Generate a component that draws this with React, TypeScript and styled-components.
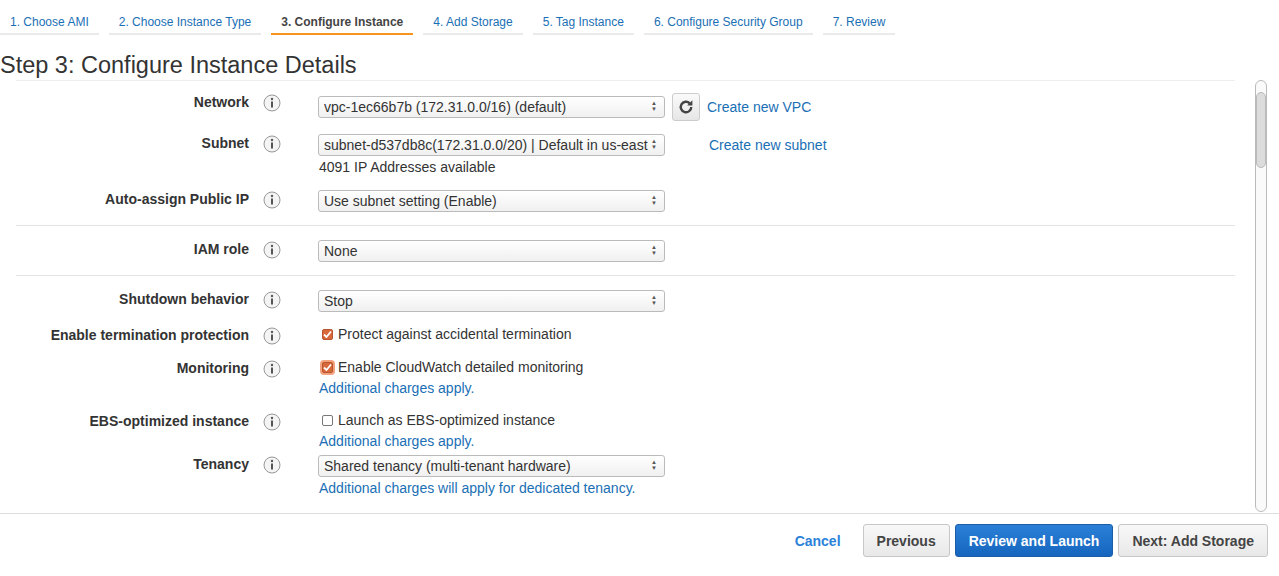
import React from "react";
import styled, { createGlobalStyle } from "styled-components";

const Global = createGlobalStyle`
  body { margin: 0; font-family: "Liberation Sans", Arial, sans-serif; color: #333; background: #fff; }
`;

const Page = styled.div`
  width: 1279px; height: 576px; display: flex; flex-direction: column; overflow: hidden;
`;
const Tabs = styled.div`
  display: flex; gap: 10px; padding-top: 12px; height: 24px;
`;
const Tab = styled.div<{ $active?: boolean }>`
  font-size: 12px; padding: 3px 10px 0 10px; height: 23px; box-sizing: border-box;
  color: ${p => (p.$active ? "#444" : "#1a6fb5")};
  font-weight: ${p => (p.$active ? "bold" : "normal")};
  border-bottom: 2px solid ${p => (p.$active ? "#f7941d" : "#eaeaea")};
  white-space: nowrap;
`;
const Heading = styled.h1`
  margin: 0; font-size: 23.5px; font-weight: normal; color: #333; height: 44px; line-height: 58px;
`;
const Body = styled.div`
  display: flex; height: 433px; border-bottom: 1px solid #ddd;
`;
const Content = styled.div`
  width: 1219px; margin-left: 16px; border-top: 1px solid #eee; padding-top: 12px; box-sizing: border-box;
`;
const Row = styled.div<{ $mt?: number }>`
  display: grid; grid-template-columns: 233px 69px 560px; align-items: start;
  margin-top: ${p => p.$mt ?? 0}px;
`;
const Label = styled.div`
  text-align: right; font-size: 14px; font-weight: bold; line-height: 16px; padding-top: 1px;
`;
const InfoWrap = styled.div`
  display: flex; padding-left: 14px; padding-top: 1px;
`;
const Control = styled.div`
  display: flex; flex-direction: column; font-size: 14px;
`;
const Line = styled.div`
  display: flex; align-items: center; gap: 7px;
`;
const Select = styled.div`
  width: 347px; height: 22px; box-sizing: border-box; border: 1px solid #bbb; border-radius: 3px;
  background: linear-gradient(#fff, #f0f0f0); font-size: 14px; padding: 0 4px 0 5px; line-height: 20px;
  display: flex; color: #333;
`;
const SelText = styled.span`
  flex: 1; white-space: nowrap; overflow: hidden;
`;
const Arrows = styled.span`
  width: 12px; font-size: 6px; line-height: 6px; color: #555; padding-top: 3px;
  display: flex; flex-direction: column; align-items: center;
`;
const IconBtn = styled.div`
  width: 28px; height: 28px; box-sizing: border-box; border: 1px solid #ccc; border-radius: 3px;
  background: linear-gradient(#fafafa, #e6e6e6); display: flex; align-items: center; justify-content: center;
`;
const Link = styled.a`
  color: #1a6fb5; font-size: 14px; text-decoration: none; white-space: nowrap;
`;
const Spacer = styled.span`
  width: 30px;
`;
const Note = styled.div<{ $link?: boolean; $mt?: number }>`
  color: ${p => (p.$link ? "#1a6fb5" : "#333")}; margin-top: ${p => p.$mt ?? 3}px; line-height: 16px; padding-left: 1px;
`;
const Sep = styled.div<{ $mt: number }>`
  border-top: 1px solid #e4e4e4; margin-top: ${p => p.$mt}px;
`;
const Check = styled.span<{ $on?: boolean; $glow?: boolean }>`
  width: 11px; height: 11px; box-sizing: border-box; display: inline-flex; align-items: center; justify-content: center;
  border: 1px solid ${p => (p.$on ? "#b9552b" : "#777")}; border-radius: 2px;
  background: ${p => (p.$on ? "#d8693c" : "#fff")};
  box-shadow: ${p => (p.$glow ? "0 0 0 2px #f2a27e" : "none")};
  margin: 0 5px 0 4px;
`;
const CheckLine = styled.div`
  display: flex; align-items: center; font-size: 14px; line-height: 16px;
`;
const ScrollBar = styled.div`
  width: 12px; margin-left: 20px; height: 432px; border: 1px solid #bbb; border-radius: 6px; box-sizing: border-box;
  background: #fafafa; display: flex; flex-direction: column; align-items: center;
`;
const Thumb = styled.div`
  width: 10px; height: 76px; margin-top: 11px; background: #dcdcdc; border: 1px solid #bbb; border-radius: 5px; box-sizing: border-box;
`;
const Footer = styled.div`
  display: flex; justify-content: flex-end; align-items: center; gap: 5px; padding: 10px 11px 0 0;
`;
const Btn = styled.button<{ $primary?: boolean }>`
  height: 33px; font: bold 14px "Liberation Sans", Arial, sans-serif; padding: 0 13px; border-radius: 3px;
  border: 1px solid ${p => (p.$primary ? "#1a5ea8" : "#c7c7c7")};
  color: ${p => (p.$primary ? "#fff" : "#444")};
  background: ${p => (p.$primary ? "linear-gradient(#2b80d6,#1565bf)" : "linear-gradient(#f8f8f8,#e8e8e8)")};
`;
const Cancel = styled.a`
  color: #2b82d9; font-weight: bold; font-size: 14px; margin-right: 17px;
`;

const Info = () => (
  <svg width="18" height="18" viewBox="0 0 18 18">
    <circle cx="9" cy="9" r="8" fill="#f4f4f4" stroke="#999" />
    <circle cx="9" cy="5" r="1.2" fill="#555" />
    <rect x="8" y="7.5" width="2" height="6" fill="#555" />
  </svg>
);
const Sel = ({ children }: { children: React.ReactNode }) => (
  <Select><SelText>{children}</SelText><Arrows><span>▲</span><span>▼</span></Arrows></Select>
);
const Tick = () => (
  <svg width="9" height="9" viewBox="0 0 9 9"><path d="M1 4.5 L3.5 7 L8 1.5" stroke="#fff" strokeWidth="1.8" fill="none" /></svg>
);

export default function App() {
  const tabs = ["1. Choose AMI", "2. Choose Instance Type", "3. Configure Instance", "4. Add Storage", "5. Tag Instance", "6. Configure Security Group", "7. Review"];
  return (
    <Page>
      <Global />
      <Tabs>{tabs.map((t, i) => <Tab key={t} $active={i === 2}>{t}</Tab>)}</Tabs>
      <Heading>Step 3: Configure Instance Details</Heading>
      <Body>
        <Content>
          <Row>
            <Label>Network</Label><InfoWrap><Info /></InfoWrap>
            <Control><Line><Sel>vpc-1ec66b7b (172.31.0.0/16) (default)</Sel>
              <IconBtn><svg width="18" height="18" viewBox="0 0 24 24"><path d="M19 12a7 7 0 1 1-2.05-4.95" stroke="#444" strokeWidth="3.2" fill="none" /><path d="M20.5 3v7h-7z" fill="#444" /></svg></IconBtn>
              <Link>Create new VPC</Link></Line></Control>
          </Row>
          <Row $mt={13}>
            <Label>Subnet</Label><InfoWrap><Info /></InfoWrap>
            <Control><Line><Sel>subnet-d537db8c(172.31.0.0/20) | Default in us-east-1a</Sel><Spacer /><Link>Create new subnet</Link></Line>
              <Note>4091 IP Addresses available</Note></Control>
          </Row>
          <Row $mt={15}>
            <Label>Auto-assign Public IP</Label><InfoWrap><Info /></InfoWrap>
            <Control><Sel>Use subnet setting (Enable)</Sel></Control>
          </Row>
          <Sep $mt={13} />
          <Row $mt={14}>
            <Label>IAM role</Label><InfoWrap><Info /></InfoWrap>
            <Control><Sel>None</Sel></Control>
          </Row>
          <Sep $mt={13} />
          <Row $mt={14}>
            <Label>Shutdown behavior</Label><InfoWrap><Info /></InfoWrap>
            <Control><Sel>Stop</Sel></Control>
          </Row>
          <Row $mt={14}>
            <Label>Enable termination protection</Label><InfoWrap><Info /></InfoWrap>
            <Control><CheckLine><Check $on><Tick /></Check>Protect against accidental termination</CheckLine></Control>
          </Row>
          <Row $mt={14}>
            <Label>Monitoring</Label><InfoWrap><Info /></InfoWrap>
            <Control><CheckLine><Check $on $glow><Tick /></Check>Enable CloudWatch detailed monitoring</CheckLine>
              <Note $link $mt={5}>Additional charges apply.</Note></Control>
          </Row>
          <Row $mt={16}>
            <Label>EBS-optimized instance</Label><InfoWrap><Info /></InfoWrap>
            <Control><CheckLine><Check />Launch as EBS-optimized instance</CheckLine>
              <Note $link $mt={5}>Additional charges apply.</Note></Control>
          </Row>
          <Row $mt={6}>
            <Label>Tenancy</Label><InfoWrap><Info /></InfoWrap>
            <Control><Sel>Shared tenancy (multi-tenant hardware)</Sel>
              <Note $link>Additional charges will apply for dedicated tenancy.</Note></Control>
          </Row>
        </Content>
        <ScrollBar><Thumb /></ScrollBar>
      </Body>
      <Footer>
        <Cancel>Cancel</Cancel>
        <Btn>Previous</Btn>
        <Btn $primary>Review and Launch</Btn>
        <Btn>Next: Add Storage</Btn>
      </Footer>
    </Page>
  );
}
